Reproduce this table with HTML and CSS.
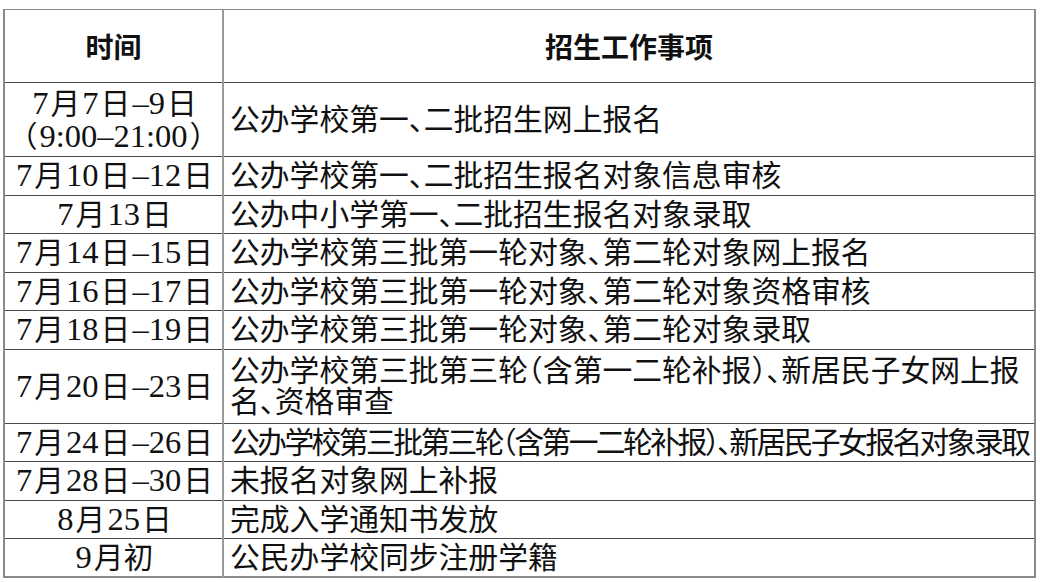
FILE: index.html
```html
<!DOCTYPE html>
<html lang="zh-CN">
<head>
<meta charset="utf-8">
<title>招生工作安排</title>
<link rel="stylesheet" href="styles.css">
</head>
<body>
<table class="sched">
  <colgroup><col class="c-time"><col class="c-task"></colgroup>
  <thead>
    <tr class="hd"><th>时间</th><th>招生工作事项</th></tr>
  </thead>
  <tbody>
    <tr class="dbl"><td class="t"><span class="n">7</span>月<span class="n">7</span>日<span class="n">–9</span>日<br>（<span class="n">9:00–21:00</span>）</td><td class="w">公办学校第一、二批招生网上报名</td></tr>
    <tr class="sg"><td class="t"><span class="n">7</span>月<span class="n">10</span>日<span class="n">–12</span>日</td><td class="w">公办学校第一、二批招生报名对象信息审核</td></tr>
    <tr class="sg"><td class="t"><span class="n">7</span>月<span class="n">13</span>日</td><td class="w">公办中小学第一、二批招生报名对象录取</td></tr>
    <tr class="sg"><td class="t"><span class="n">7</span>月<span class="n">14</span>日<span class="n">–15</span>日</td><td class="w">公办学校第三批第一轮对象、第二轮对象网上报名</td></tr>
    <tr class="sg"><td class="t"><span class="n">7</span>月<span class="n">16</span>日<span class="n">–17</span>日</td><td class="w">公办学校第三批第一轮对象、第二轮对象资格审核</td></tr>
    <tr class="sg"><td class="t"><span class="n">7</span>月<span class="n">18</span>日<span class="n">–19</span>日</td><td class="w">公办学校第三批第一轮对象、第二轮对象录取</td></tr>
    <tr class="dbl"><td class="t"><span class="n">7</span>月<span class="n">20</span>日<span class="n">–23</span>日</td><td class="w">公办学校第三批第三轮（含第一二轮补报）、新居民子女网上报名、资格审查</td></tr>
    <tr class="sg"><td class="t"><span class="n">7</span>月<span class="n">24</span>日<span class="n">–26</span>日</td><td class="w tight">公办学校第三批第三轮（含第一二轮补报）、新居民子女报名对象录取</td></tr>
    <tr class="sg"><td class="t"><span class="n">7</span>月<span class="n">28</span>日<span class="n">–30</span>日</td><td class="w">未报名对象网上补报</td></tr>
    <tr class="sg"><td class="t"><span class="n">8</span>月<span class="n">25</span>日</td><td class="w">完成入学通知书发放</td></tr>
    <tr class="sg"><td class="t"><span class="n">9</span>月初</td><td class="w">公民办学校同步注册学籍</td></tr>
  </tbody>
</table>
</body>
</html>
```

FILE: styles.css
```css
html, body {
  margin: 0;
  padding: 0;
  background: #ffffff;
}
body {
  padding: 9px 4px 0 3px;
}
.sched {
  width: 1033px;
  border-collapse: collapse;
  table-layout: fixed;
  color: #111111;
  font-family: "Liberation Serif", "Noto Sans CJK SC", serif;
  font-size: 29.8px;
  border-top: 1px solid #8a8a8a;
  border-left: 2px solid #8a8a8a;
  border-right: 2px solid #8a8a8a;
  border-bottom: 2px solid #8a8a8a;
}
.c-time { width: 219px; }
.sched th, .sched td {
  padding: 0;
  border-top: 1px solid #4a4a4a;
  border-bottom: 1px solid #4a4a4a;
  line-height: 31px;
  vertical-align: middle;
}
.sched th:first-child, .sched td:first-child {
  border-right: 2px solid #9a9a9a;
}
.sched th {
  font-family: "Noto Sans CJK SC", sans-serif;
  font-weight: 700;
  font-size: 28px;
  text-align: center;
  color: #111111;
}
.hd { height: 73px; }
.hd th { border-top: 1px solid #8a8a8a; }
.sg { height: 38.5px; }
.dbl { height: 74px; }
.dbl .t { line-height: 32px; }
.t {
  text-align: center;
  white-space: nowrap;
  font-feature-settings: "halt";
}
.n {
  font-size: 32.5px;
  margin: 0 2px;
}
.w {
  padding-left: 6px !important;
  padding-right: 8px !important;
  font-feature-settings: "halt";
}
.tight {
  letter-spacing: -2.6px;
  white-space: nowrap;
}
```
